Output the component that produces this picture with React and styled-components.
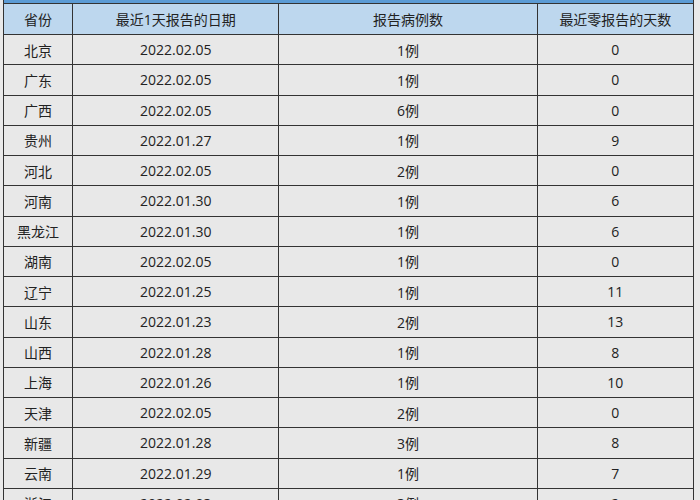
import styled, { createGlobalStyle } from 'styled-components';

const rows = [
  ['北京', '2022.02.05', '1例', '0'],
  ['广东', '2022.02.05', '1例', '0'],
  ['广西', '2022.02.05', '6例', '0'],
  ['贵州', '2022.01.27', '1例', '9'],
  ['河北', '2022.02.05', '2例', '0'],
  ['河南', '2022.01.30', '1例', '6'],
  ['黑龙江', '2022.01.30', '1例', '6'],
  ['湖南', '2022.02.05', '1例', '0'],
  ['辽宁', '2022.01.25', '1例', '11'],
  ['山东', '2022.01.23', '2例', '13'],
  ['山西', '2022.01.28', '1例', '8'],
  ['上海', '2022.01.26', '1例', '10'],
  ['天津', '2022.02.05', '2例', '0'],
  ['新疆', '2022.01.28', '3例', '8'],
  ['云南', '2022.01.29', '1例', '7'],
  ['浙江', '2022.02.03', '3例', '2'],
];

export default function App() {
  return (
    <>
      <GlobalStyle />
      <StyledPage>
        <StyledFrame>
          <StyledTitleStrip />
          <StyledTable>
            <colgroup>
              <col style={{ width: 69 }} />
              <col style={{ width: 206 }} />
              <col style={{ width: 258 }} />
              <col style={{ width: 156 }} />
            </colgroup>
            <thead>
              <StyledHeadRow>
                <StyledHeadCell>省份</StyledHeadCell>
                <StyledHeadCell>最近1天报告的日期</StyledHeadCell>
                <StyledHeadCell>报告病例数</StyledHeadCell>
                <StyledHeadCell>最近零报告的天数</StyledHeadCell>
              </StyledHeadRow>
            </thead>
            <tbody>
              {rows.map((r) => (
                <StyledRow key={r[0]}>
                  {r.map((v, i) => (
                    <StyledCell key={i}>{v}</StyledCell>
                  ))}
                </StyledRow>
              ))}
            </tbody>
          </StyledTable>
        </StyledFrame>
      </StyledPage>
    </>
  );
}

const GlobalStyle = createGlobalStyle`
  body {
    margin: 0;
    background: #e9e9e9;
    font-family: "Open Sans", "Noto Sans CJK SC", sans-serif;
  }
`;
const StyledPage = styled.div`
  height: 500px;
  overflow: hidden;
  padding-left: 3px;
`;
const StyledFrame = styled.div`
  width: 691px;
`;
const StyledTitleStrip = styled.div`
  height: 3px;
  background: #5b9bd5;
  border-left: 1.5px solid #333;
  border-right: 1.5px solid #333;
`;
const StyledTable = styled.table`
  width: 691px;
  table-layout: fixed;
  border-collapse: collapse;
  font-size: 14px;
  color: #222;
`;
const StyledHeadRow = styled.tr`
  height: 31px;
  background: #bdd7ee;
`;
const StyledRow = styled.tr`
  height: 30.25px;
  background: #e8e8e8;
`;
const StyledHeadCell = styled.th`
  border: 1.5px solid #333;
  font-weight: 400;
  padding: 0;
  text-align: center;
`;
const StyledCell = styled.td`
  border: 1.5px solid #333;
  padding: 0;
  text-align: center;
`;
